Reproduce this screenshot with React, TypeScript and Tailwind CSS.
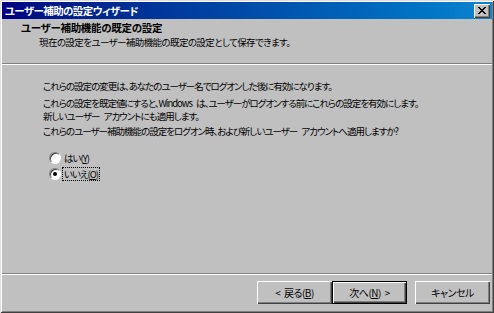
import React, { useState } from 'react';

const jp = { fontFamily: '"Noto Sans CJK JP", "Noto Sans", sans-serif', fontFeatureSettings: '"palt"' };

const Radio = ({ checked, label, focus, onClick }: any) => (
  <button onClick={onClick} className="flex items-center gap-[2px] h-[16px] text-left">
    <span className="relative w-[12px] h-[12px] rounded-full bg-white border border-t-[#808080] border-l-[#808080] border-b-white border-r-white shadow-[inset_1px_1px_0_#404040]">
      {checked && <span className="absolute left-[3px] top-[3px] w-[4px] h-[4px] rounded-full bg-black" />}
    </span>
    <span className={`px-[1px] leading-[12px] ${focus ? 'outline outline-1 outline-dotted outline-black' : ''}`}>{label}</span>
  </button>
);

const Btn = ({ children, primary }: any) => (
  <button
    className={`w-[75px] h-[23px] bg-[#c0c0c0] text-[10px] tracking-[-0.5px] [word-spacing:2px] leading-none flex items-center justify-center ${
      primary
        ? 'border border-black shadow-[inset_1px_1px_0_#fff,inset_-1px_-1px_0_#404040,inset_-2px_-2px_0_#808080]'
        : 'shadow-[inset_1px_1px_0_#fff,inset_-1px_-1px_0_#404040,inset_-2px_-2px_0_#808080]'
    }`}
  >
    {children}
  </button>
);

const App: React.FC = () => {
  const [yes, setYes] = useState(false);

  return (
    <div style={jp} className="w-[494px] h-[313px] bg-[#c0c0c0] text-black text-[9.5px] tracking-[-1px] [word-spacing:3px] flex flex-col p-[2px] shadow-[inset_1px_1px_0_#dfdfdf,inset_-1px_-1px_0_#404040,inset_2px_2px_0_#fff,inset_-2px_-2px_0_#808080] overflow-hidden">
      <div className="h-[17px] shrink-0 flex items-center justify-between pl-[3px] pr-[2px] bg-gradient-to-r from-[#000080] to-[#1084d0] text-white font-bold text-[10.5px] tracking-[-0.6px]">
        <span>ユーザー補助の設定ウィザード</span>
        <span className="w-[16px] h-[14px] bg-[#c0c0c0] flex items-center justify-center shadow-[inset_1px_1px_0_#fff,inset_-1px_-1px_0_#404040,inset_-2px_-2px_0_#808080]">
          <svg width="8" height="7" viewBox="0 0 8 7">
            <path d="M0 0h2v1h1v1h2V1h1V0h2v1H7v1H6v1H5v1h1v1h1v1h1v1H6V6H5V5H3v1H2v1H0V6h1V5h1V4h1V3H2V2H1V1H0z" fill="#000" />
          </svg>
        </span>
      </div>

      <div className="h-[44px] shrink-0 flex flex-col pt-[2px]">
        <div className="pl-[19px] font-bold leading-[14px] text-[10.5px] tracking-[-0.3px]">ユーザー補助機能の既定の設定</div>
        <div className="pl-[37px] leading-[13px] mt-[1px] tracking-[-0.6px]">現在の設定をユーザー補助機能の既定の設定として保存できます。</div>
      </div>
      <div className="h-[2px] shrink-0 border-t border-[#808080] border-b border-b-white" />

      <div className="flex-1 flex flex-col pl-[41px] pt-[15px]">
        <p className="leading-[13px]">これらの設定の変更は、あなたのユーザー名でログオンした後に有効になります。</p>
        <p className="leading-[13px] mt-[4px]">
          これらの設定を既定値にすると、Windows は、ユーザーがログオンする前にこれらの設定を有効にします。
          <br />
          新しいユーザー アカウントにも適用します。
        </p>
        <p className="leading-[13px] mt-[2px]">これらのユーザー補助機能の設定をログオン時、および新しいユーザー アカウントへ適用しますか?</p>
        <div className="flex flex-col pl-[6px] mt-[12px]">
          <Radio checked={yes} label={<>はい(<u>Y</u>)</>} onClick={() => setYes(true)} />
          <Radio checked={!yes} focus label={<>いいえ(<u>O</u>)</>} onClick={() => setYes(false)} />
        </div>
      </div>

      <div className="h-[2px] shrink-0 border-t border-[#808080] border-b border-b-white" />
      <div className="h-[36px] shrink-0 flex items-start justify-end pt-[6px] pr-[2px]">
        <Btn>&lt; 戻る(<u>B</u>)</Btn>
        <Btn primary>次へ(<u>N</u>) &gt;</Btn>
        <div className="w-[8px]" />
        <Btn>キャンセル</Btn>
      </div>
    </div>
  );
};

export default App;
